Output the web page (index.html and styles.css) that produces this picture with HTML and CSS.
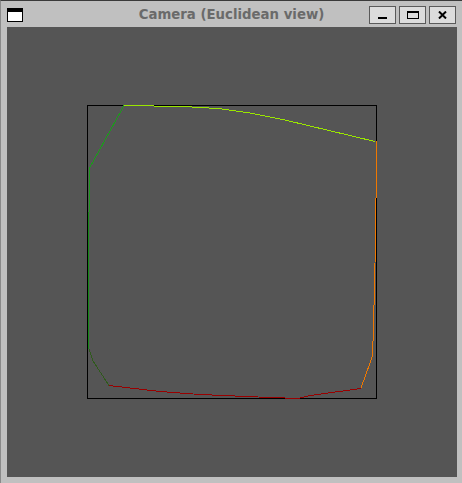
FILE: index.html
```html
<!DOCTYPE html>
<html>
<head>
<meta charset="utf-8">
<link rel="stylesheet" href="styles.css">
</head>
<body>
<div class="window">
  <div class="titlebar">
    <div class="menu-icon"></div>
    <div class="title">Camera (Euclidean view)</div>
    <div class="buttons">
      <div class="btn"><svg width="9" height="2" viewBox="0 0 9 2"><rect width="9" height="2" fill="#000"/></svg></div>
      <div class="btn"><svg width="12" height="8" viewBox="0 0 12 8"><rect x="0.5" y="0.5" width="11" height="7" fill="none" stroke="#000"/><rect x="0" y="0" width="12" height="2" fill="#000"/></svg></div>
      <div class="btn"><svg width="9" height="8" viewBox="0 0 9 8"><path d="M1 0.5 L8 7.5 M8 0.5 L1 7.5" stroke="#000" stroke-width="2" fill="none"/></svg></div>
    </div>
  </div>
  <div class="canvas">
    <svg class="plot" width="450" height="450" viewBox="0 0 450 450">
      <g transform="translate(-7,-28)" fill="none" stroke-width="1" shape-rendering="crispEdges">
        <rect x="87.5" y="106.5" width="289" height="293" stroke="#000"/>
        <polyline points="89,213 89,170 124,106.5" stroke="#1c9a1c"/>
        <polyline points="124,106.5 183,107.5 218,109.5 250,114 285,121 375,142.5" stroke="#9ae600"/>
        <polyline points="376,142 376,199 375.5,243 374.5,285 373.5,328 372.5,357 361,389" stroke="#f07800"/>
        <polyline points="361,389.5 310,396.5 300,399 285,399 270,398.5 200,395.5 160,392.5 109,386.5" stroke="#9a0000"/>
        <polyline points="109,386.5 93,362 89,350" stroke="#2f5a1c"/>
        <polyline points="88.5,350 88.5,213" stroke="#148814"/>
      </g>
    </svg>
  </div>
</div>
</body>
</html>
```

FILE: styles.css
```css
html, body {
  margin: 0;
  padding: 0;
  background: #c0c0c0;
}
.window {
  width: 462px;
  height: 483px;
  box-sizing: border-box;
  background: #c0c0c0;
  border-top: 1px solid #3a3a3a;
  border-left: 1px solid #8a8a8a;
  padding: 0 6px 6px 6px;
  display: flex;
  flex-direction: column;
}
.titlebar {
  height: 27px;
  display: grid;
  grid-template-columns: 1fr auto 1fr;
  align-items: center;
}
.menu-icon {
  width: 14px;
  height: 9px;
  border: 1px solid #000;
  border-top: 4px solid #000;
  background: #fff;
  margin-top: 1px;
}
.title {
  font-family: "DejaVu Sans", sans-serif;
  font-weight: bold;
  font-size: 13.3px;
  color: #6a6a6a;
  white-space: nowrap;
}
.buttons {
  justify-self: end;
  display: flex;
  gap: 3px;
  margin-top: 2px;
}
.btn {
  width: 25px;
  height: 16px;
  border: 1px solid #5a5a5a;
  background: #dcdcdc;
  display: flex;
  align-items: center;
  justify-content: center;
}
.btn svg {
  display: block;
}
.btn:first-child svg {
  margin-top: 6px;
}
.canvas {
  width: 450px;
  height: 450px;
  background: #555555;
}
.plot {
  display: block;
}
```
